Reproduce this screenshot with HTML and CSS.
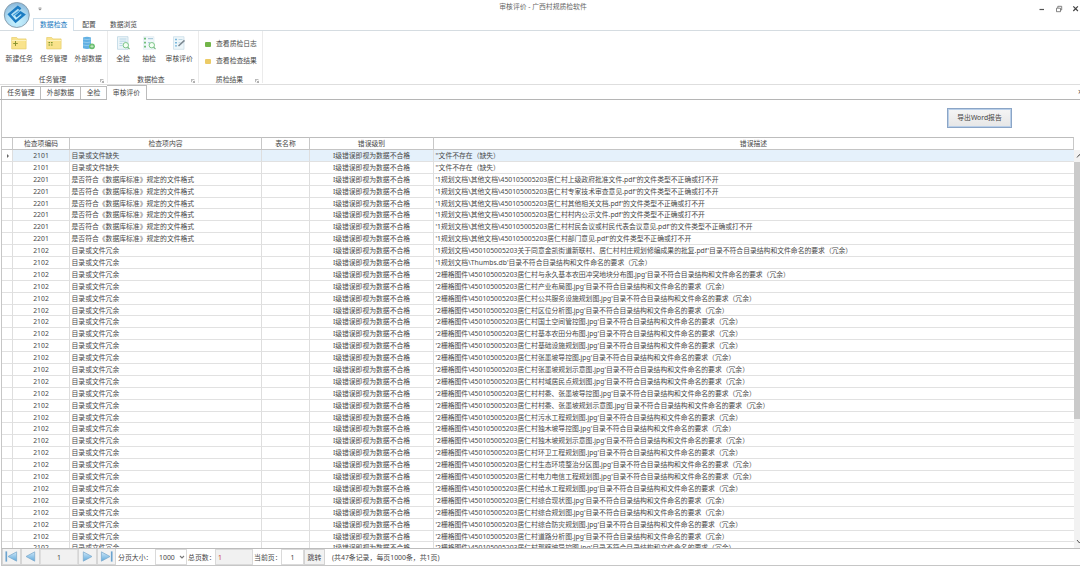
FILE: index.html
```html
<!doctype html>
<html lang="zh-CN">
<head>
    <meta charset="UTF-8">
    <title>审核评价 - 广西村规质检软件</title>
    <link rel="stylesheet" href="styles.css">
</head>
<body>
<div class="window">
    <div class="titlebar">
        <svg class="logo" viewBox="0 0 28 28">
            <defs>
                <radialGradient id="ball" cx="50%" cy="75%" r="70%">
                    <stop offset="0" stop-color="#c8f4ff"/>
                    <stop offset="0.6" stop-color="#b0dcf3"/>
                    <stop offset="1" stop-color="#8dbbdc"/>
                </radialGradient>
            </defs>
            <circle cx="13.8" cy="14" r="12.5" fill="url(#ball)" stroke="#8298a8" stroke-width="0.9"/>
            <path d="M17.6 8.2L14.8 6L6.2 13.4L12.6 20.6L20.8 13.6L17.6 11.6L12.8 15.6" fill="none" stroke="#1c7cc2" stroke-width="2.5"/>
            <path d="M16.4 9.7L10.2 14.2" stroke="#3c9bd8" stroke-width="1.2"/>
        </svg>
        <svg class="quick" viewBox="0 0 4 4"><path d="M0.6 0.5h2.8M0.6 1.7h2.8L2 3.3z" fill="#777" stroke="#888" stroke-width="0.4"/></svg>
        <div class="title">审核评价 - 广西村规质检软件</div>
        <svg class="win-btns" viewBox="0 0 42 10">
            <path d="M1.5 5.5h4.5" stroke="#555" stroke-width="1.2"/>
            <path d="M18.5 4.2h4v3.5h-4zM19.8 4v-1.7h3.9v3.6h-1" fill="none" stroke="#666" stroke-width="0.8"/>
            <path d="M35.3 2.4l4.6 4.6M39.9 2.4l-4.6 4.6" stroke="#444" stroke-width="1.2"/>
        </svg>
    </div>
    <div class="ribbon-tabs">
        <span class="on">数据检查</span>
        <span>配置</span>
        <span>数据浏览</span>
    </div>

    <div class="ribbon">
        <div class="group g1">
            <div class="btns">
                <div class="btn">
                    <svg viewBox="0 0 16 14"><path d="M0.7 1.5h5l1.2 1.4h8.2v10H0.7z" fill="#f9e38c" stroke="#e8cd6d" stroke-width="0.7"/><path d="M1 4.5h14" stroke="#fcf1bd"/><path d="M4.5 5v5M2.2 7.5h4.6" stroke="#8a9433"/></svg>
                    <p>新建任务</p>
                </div>
                <div class="btn">
                    <svg viewBox="0 0 16 14"><path d="M0.7 1.5h5l1.2 1.4h8.2v10H0.7z" fill="#f9e38c" stroke="#e8cd6d" stroke-width="0.7"/><path d="M1 4.5h14" stroke="#fcf1bd"/><path d="M2.5 6.6h1.6M5 6.6h1.6M2.5 9h1.6M5 9h1.6" stroke="#79932d" stroke-width="1.2"/></svg>
                    <p>任务管理</p>
                </div>
                <div class="btn">
                    <svg viewBox="0 0 16 14"><path d="M3 1.4q4-1.4 8 0v10.8q-4 1.5-8 0z" fill="#61b0e3"/><path d="M3 3q4 1.2 8 0M3 6q4 1.2 8 0M3 9q4 1.2 8 0" fill="none" stroke="#a4d2f0" stroke-width="0.7"/><circle cx="12" cy="10.3" r="2.9" fill="#68bd6e"/><path d="M10.4 10.3h3.2M12 8.8v3" stroke="#d9f2d5" stroke-width="0.8"/></svg>
                    <p>外部数据</p>
                </div>
            </div>
            <div class="caption">任务管理</div>
            <svg class="corner" viewBox="0 0 5 5"><path d="M0.5 4V0.5h3.8M2 2l2.2 2.2M4.4 2.2v2.2H2.2" fill="none" stroke="#777" stroke-width="0.7"/></svg>
        </div>
        <div class="group g2">
            <div class="btns">
                <div class="btn narrow">
                    <svg viewBox="0 0 16 14"><path d="M2.5 0.7h10.5v12.6H2.5z" fill="#edf6fa" stroke="#b5d1df" stroke-width="0.7"/><path d="M4.5 3h7M4.5 5.2h7M4.5 7.4h3M4.5 9.6h3" stroke="#a4cbde" stroke-width="0.8"/><circle cx="10.8" cy="9.2" r="2.7" fill="#f3fff3" stroke="#7bc487"/><path d="M12.7 11.2l1.8 2" stroke="#79b982" stroke-width="1.2"/></svg>
                    <p>全检</p>
                </div>
                <div class="btn narrow">
                    <svg viewBox="0 0 16 14"><path d="M2.5 0.7h10.5v12.6H2.5z" fill="#f1f8fb" stroke="#d7e5ec" stroke-width="0.5"/><path d="M3 2.7h2M3 6.7h2M3 10.7h2" stroke="#72bf7c" stroke-width="1.8"/><path d="M7 2.7h5M7 6.7h2" stroke="#9cc2d4"/><circle cx="10.8" cy="9.2" r="2.7" fill="#f3fff3" stroke="#7bc487"/><path d="M12.7 11.2l1.8 2" stroke="#79b982" stroke-width="1.2"/></svg>
                    <p>抽检</p>
                </div>
                <div class="btn">
                    <svg viewBox="0 0 16 14"><path d="M2.5 0.7h10.5v12.6H2.5z" fill="#edf6fa" stroke="#c5dbe6" stroke-width="0.7"/><path d="M4 3.5h2M4 6.7h2M4 9.9h2" stroke="#7bb8dc" stroke-width="1.4"/><path d="M7.5 3.5h4M7.5 6.7h2" stroke="#bcd6e2"/><path d="M7.5 10l6-5.6" stroke="#7b8790" stroke-width="1.5"/></svg>
                    <p>审核评价</p>
                </div>
            </div>
            <div class="caption">数据检查</div>
            <svg class="corner" viewBox="0 0 5 5"><path d="M0.5 4V0.5h3.8M2 2l2.2 2.2M4.4 2.2v2.2H2.2" fill="none" stroke="#777" stroke-width="0.7"/></svg>
        </div>
        <div class="group g3">
            <div class="links">
                <div class="link"><i class="green"></i>查看质检日志</div>
                <div class="link"><i class="yellow"></i>查看检查结果</div>
            </div>
            <div class="caption">质检结果</div>
            <svg class="corner" viewBox="0 0 5 5"><path d="M0.5 4V0.5h3.8M2 2l2.2 2.2M4.4 2.2v2.2H2.2" fill="none" stroke="#777" stroke-width="0.7"/></svg>
        </div>
    </div>

    <div class="doc-tabs">
        <span class="w40">任务管理</span>
        <span class="w40">外部数据</span>
        <span class="w26">全检</span>
        <span class="w40 on">审核评价</span>
        <b class="close">×</b>
    </div>

    <div class="toolbar">
        <button class="export">导出Word报告</button>
    </div>

    <div class="grid">
        <div class="row head">
            <div></div>
            <div>检查项编码</div>
            <div>检查项内容</div>
            <div>表名称</div>
            <div>错误级别</div>
            <div>错误描述</div>
        </div>
        <div class="body">
            <div class="rows" id="rows"></div>
            <div class="scroll">
                <svg viewBox="0 0 6 12"><path d="M3 7.5l2.5-3 2 3" fill="none" stroke="#555"/></svg>
                <div class="thumb"></div>
                <svg class="down" viewBox="0 0 6 12"><path d="M3 4l2.5 3 2-3" fill="none" stroke="#555"/></svg>
            </div>
        </div>
    </div>

    <div class="pager">
        <svg class="defs" width="0" height="0">
            <linearGradient id="arrow" x1="0" y1="0" x2="0" y2="1">
                <stop offset="0" stop-color="#cfe8f8"/>
                <stop offset="1" stop-color="#5fa9dc"/>
            </linearGradient>
        </svg>
        <div class="nav"><svg viewBox="0 0 16 14"><path d="M2.4 1.5v11" stroke="#6ba3cf" stroke-width="1.8"/><path d="M13.5 2v10L4.2 7z" fill="url(#arrow)" stroke="#7ba9cc" stroke-width="0.8"/></svg></div>
        <div class="nav"><svg viewBox="0 0 16 14"><path d="M12.5 2v10L3.2 7z" fill="url(#arrow)" stroke="#7ba9cc" stroke-width="0.8"/></svg></div>
        <div class="num">1</div>
        <div class="nav"><svg viewBox="0 0 16 14"><path d="M3.5 2v10L12.8 7z" fill="url(#arrow)" stroke="#7ba9cc" stroke-width="0.8"/></svg></div>
        <div class="nav"><svg viewBox="0 0 16 14"><path d="M2.5 2v10L11.8 7z" fill="url(#arrow)" stroke="#7ba9cc" stroke-width="0.8"/><path d="M13.6 1.5v11" stroke="#6ba3cf" stroke-width="1.8"/></svg></div>
        <div class="size-label">分页大小：</div>
        <div class="size">1000<svg viewBox="0 0 6 6"><path d="M1 2l2 2 2-2" fill="none" stroke="#777" stroke-width="1.1"/></svg></div>
        <div class="label">总页数：</div>
        <div class="total">1</div>
        <div class="label">当前页：</div>
        <div class="current">1</div>
        <div class="jump">跳转</div>
        <div class="info">(共47条记录，每页1000条，共1页)</div>
    </div>
</div>

<script>
    var village = "'2栅格图件\\450105005203居仁村";
    var docs = "'1规划文档\\其他文档\\450105005203居仁村";
    var extra = "'目录不符合目录结构和文件命名的要求（冗余）";
    var list = [];

    function add(code, content, desc) {
        list.push([code, content, desc]);
    }

    add('2101', '目录或文件缺失', "''文件不存在（缺失）");
    add('2101', '目录或文件缺失', "''文件不存在（缺失）");

    ['上级政府批准文件', '专家技术审查意见', '其他相关文档', '村内公示文件', '村民会议或村民代表会议意见', '部门意见'].forEach(function (name) {
        add('2201', '是否符合《数据库标准》规定的文件格式', docs + name + ".pdf'的文件类型不正确或打不开");
    });

    add('2102', '目录或文件冗余', "'1规划文档\\450105005203关于同意金凯街道新联村、居仁村村庄规划修编成果的批复.pdf" + extra);
    add('2102', '目录或文件冗余', "'1规划文档\\Thumbs.db" + extra);

    ['与永久基本农田冲突地块分布图', '产业布局图', '公共服务设施规划图', '区位分析图', '国土空间管控图', '基本农田分布图',
        '基础设施规划图', '张墨坡导控图', '张墨坡规划示意图', '村域居民点规划图', '村委、张墨坡导控图', '村委、张墨坡规划示意图',
        '污水工程规划图', '独木坡导控图', '独木坡规划示意图', '环卫工程规划图', '生态环境整治分区图', '电力电信工程规划图',
        '给水工程规划图', '综合现状图', '综合规划图', '综合防灾规划图', '道路分析图', '那瞎坡导控图'].forEach(function (name) {
        add('2102', '目录或文件冗余', village + name + '.jpg' + extra);
    });

    var html = '';
    list.forEach(function (r, i) {
        html += '<div class="row' + (i == 0 ? ' current-row' : '') + '">' +
            '<div>' + (i == 0 ? '<i class="mark"></i>' : '') + '</div>' +
            '<div>' + r[0] + '</div><div>' + r[1] + '</div><div></div>' +
            '<div>I级错误即视为数据不合格</div><div>' + r[2] + '</div></div>';
    });
    document.getElementById('rows').innerHTML = html;
</script>
</body>
</html>
```
FILE: styles.css
```css
* {
    box-sizing: border-box;
}

body {
    margin: 0;
    background: #fff;
    color: #484848;
    font-family: "Noto Sans", "Noto Sans CJK SC", sans-serif;
    font-size: 6.82px;
    line-height: 10px;
    overflow: hidden;
}

p {
    margin: 0;
}

svg {
    display: block;
}

.window {
    width: 1080px;
    height: 567px;
    display: flex;
    flex-direction: column;
    white-space: nowrap;
}

/* 标题栏 */
.titlebar {
    position: relative;
    height: 18px;
    flex: none;
    text-align: center;
}

.title {
    padding: 2px 0 0 6px;
    color: #666;
}

.logo {
    position: absolute;
    left: 3px;
    top: 1px;
    width: 28px;
    height: 28px;
    z-index: 2;
}

.quick {
    position: absolute;
    left: 38px;
    top: 7px;
    width: 4px;
    height: 4px;
}

.win-btns {
    position: absolute;
    right: 0;
    top: 4px;
    width: 42px;
    height: 10px;
}

.ribbon-tabs {
    display: flex;
    height: 13px;
    flex: none;
    padding-left: 33px;
    border-bottom: 1px solid #d5dce1;
}

.ribbon-tabs span {
    height: 13px;
    padding: 2px 7px 0;
}

.ribbon-tabs .on {
    padding: 1px 6px 0;
    margin-right: 1px;
    border: 1px solid #cfe0ec;
    border-bottom: none;
    background: #fff;
    color: #1878c0;
}

/* 功能区 */
.ribbon {
    display: flex;
    height: 54px;
    flex: none;
    border-bottom: 1px solid #dedede;
}

.group {
    position: relative;
    height: 52px;
    border-right: 1px solid #ebebeb;
}

.g1 {
    width: 108px;
}

.g2 {
    width: 91px;
}

.g3 {
    width: 64px;
}

.btns {
    display: flex;
    height: 44px;
    padding: 5px 0 0 2px;
}

.btn {
    width: 34.5px;
    text-align: center;
}

.btn.narrow {
    width: 26px;
}

.btn svg {
    width: 16px;
    height: 14px;
    margin: 0 auto;
}

.btn p {
    margin: 4px -4px 0;
}

.caption {
    text-align: center;
    padding-right: 2px;
}

.g2 .caption {
    padding: 0 4px 0 0;
}

.corner {
    position: absolute;
    right: 3px;
    bottom: 0;
    width: 4px;
    height: 4px;
}

.links {
    height: 44px;
    padding: 8px 0 0 6px;
}

.link {
    display: flex;
    align-items: center;
    margin-bottom: 7px;
}

.link i {
    width: 6px;
    height: 5px;
    margin-right: 5px;
    border-radius: 1px;
}

.green {
    background: #72b549;
}

.yellow {
    background: #eccb66;
}

/* 文档页签 */
.doc-tabs {
    display: flex;
    align-items: flex-end;
    position: relative;
    height: 15px;
    flex: none;
    padding-left: 1px;
    border-bottom: 1px solid #b5b5b5;
}

.doc-tabs span {
    height: 13px;
    padding-top: 1px;
    text-align: center;
    border: 1px solid #bcbcbc;
    border-left: none;
    border-bottom: none;
}

.doc-tabs span:first-child {
    border-left: 1px solid #bcbcbc;
}

.w40 {
    width: 40px;
}

.w26 {
    width: 26px;
}

.doc-tabs .on {
    height: 15px;
    margin-bottom: -1px;
    padding-top: 2px;
    background: #fff;
}

.close {
    position: absolute;
    left: 1078px;
    top: 2px;
    font-size: 8px;
    font-weight: normal;
}

.toolbar {
    display: flex;
    justify-content: flex-end;
    height: 37px;
    flex: none;
    margin-left: 1px;
    padding: 8px 68px 0 0;
    border-left: 1px solid #c6c6c6;
}

.export {
    width: 65px;
    height: 20px;
    padding: 0;
    border: 1px solid #8ba5c6;
    box-shadow: inset 0 0 0 1px #b9cfe9;
    background: linear-gradient(#f5f5f5, #e6e6e6);
    font: inherit;
    color: #444;
}

/* 表格 */
.grid {
    display: flex;
    flex-direction: column;
    height: 412px;
    flex: none;
    margin-left: 1px;
    border-left: 1px solid #c6c6c6;
    border-bottom: 1px solid #bdbdbd;
    overflow: hidden;
}

.row {
    display: grid;
    grid-template-columns: 11px 57px 192px 48px 124px 640px;
    width: 1072px;
    height: 11.893px;
    line-height: 11.9px;
}

.row > div {
    padding-left: 1.5px;
    border-right: 1px solid #dedede;
    border-bottom: 1px solid #e1e1e1;
    overflow: hidden;
}

.row > div:nth-child(2),
.row > div:nth-child(5) {
    padding: 0;
    text-align: center;
}

/* 描述列不画右边线 */
.rows .row > div:last-child {
    border-right: none;
}

.row.head {
    height: 13px;
    flex: none;
}

.row.head > div {
    padding: 0;
    text-align: center;
    border-top: 1px solid #bdbdbd;
    border-right-color: #c8c8c8;
    border-bottom-color: #c4c4c4;
}

.current-row > div {
    background: #e5f1fb;
}

.current-row > div:first-child {
    background: #fff;
}

.mark {
    display: block;
    width: 0;
    margin: 4px 0 0 3px;
    border: 2px solid transparent;
    border-left: 2.5px solid #666;
}

.body {
    display: flex;
    flex: 1;
    min-height: 0;
}

.rows {
    width: 1072px;
    height: 100%;
    overflow: hidden;
}

.scroll {
    display: flex;
    flex-direction: column;
    width: 6px;
    background: #f2f2f2;
}

.scroll svg {
    width: 6px;
    height: 12px;
}

.thumb {
    height: 257px;
    background: #cacaca;
}

.scroll .down {
    margin-top: auto;
}

/* 分页 */
.pager {
    display: flex;
    height: 17px;
    flex: none;
    margin-left: 1px;
    font-size: 6.9px;
    line-height: 17px;
    border-left: 1px solid #c6c6c6;
    border-bottom: 1px solid #c6c6c6;
}

.pager > div {
    height: 16px;
}

.defs {
    position: absolute;
}

.nav {
    width: 19px;
    padding: 1px 1px 0;
    border: 1px solid #d6d6d6;
    border-top: none;
    background: #f2f2f2;
}

.nav svg {
    width: 15px;
    height: 13px;
}

.num {
    width: 38px;
    text-align: center;
    background: #f1f1f1;
    border: 1px solid #dedede;
}

.num,
.total,
.current,
.size,
.jump {
    line-height: 15px;
}

.size-label {
    width: 39px;
    padding-left: 2px;
}

.size {
    display: flex;
    align-items: center;
    justify-content: space-between;
    width: 32px;
    padding: 0 1px 0 3px;
    border: 1px solid #dadada;
}

.size svg {
    width: 6px;
    height: 6px;
}

.label {
    width: 28px;
    padding-left: 1px;
}

.total {
    width: 38px;
    padding-left: 2px;
    border: 1px solid #dadada;
    background: #f1f1f1;
    color: #d04545;
}

.current {
    width: 23px;
    text-align: center;
    border: 1px solid #dadada;
}

.jump {
    width: 21px;
    text-align: center;
    border: 1px solid #d4d4d4;
    background: #f2f2f2;
}

.info {
    padding-left: 7px;
}
```
